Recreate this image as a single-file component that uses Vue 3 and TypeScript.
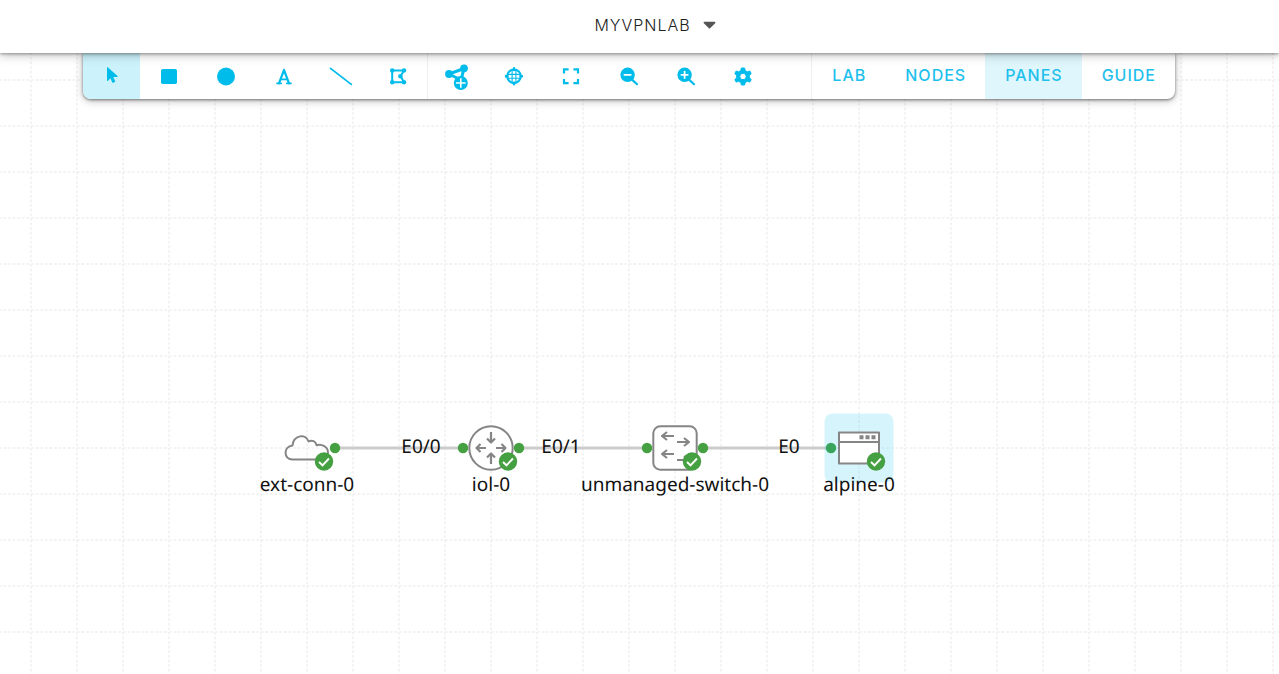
<script setup lang="ts">
import { ref } from 'vue'

interface Tool { id: string; label: string }
interface LabNode { id: string; kind: string; x: number }
interface Link { from: number; to: number; label: string; labelX: number }

const drawTools: Tool[] = [
  { id: 'select', label: 'Select' },
  { id: 'rect', label: 'Rectangle' },
  { id: 'ellipse', label: 'Ellipse' },
  { id: 'text', label: 'Text' },
  { id: 'line', label: 'Line' },
  { id: 'polygon', label: 'Polygon' },
]
const viewTools: Tool[] = [
  { id: 'add', label: 'Add nodes' },
  { id: 'center', label: 'Center view' },
  { id: 'fit', label: 'Fit to screen' },
  { id: 'out', label: 'Zoom out' },
  { id: 'in', label: 'Zoom in' },
  { id: 'settings', label: 'Settings' },
]
const groups = [drawTools, viewTools]
const tabs = ['LAB', 'NODES', 'PANES', 'GUIDE']
const activeTool = ref('select')
const activeTab = ref('PANES')
const selected = ref('alpine-0')

const nodes: LabNode[] = [
  { id: 'ext-conn-0', kind: 'cloud', x: 307 },
  { id: 'iol-0', kind: 'router', x: 491 },
  { id: 'unmanaged-switch-0', kind: 'switch', x: 675 },
  { id: 'alpine-0', kind: 'window', x: 859 },
]
const links: Link[] = [
  { from: 335, to: 463, label: 'E0/0', labelX: 421 },
  { from: 519, to: 647, label: 'E0/1', labelX: 561 },
  { from: 703, to: 831, label: 'E0', labelX: 789 },
]
</script>

<template>
  <div class="app">
    <header class="topbar">
      <button class="title" type="button">
        <span>MYVPNLAB</span>
        <svg width="13" height="8" viewBox="0 0 13 8" aria-hidden="true">
          <path d="M1.4 1.6h10.2L6.5 6.6z" fill="#555" stroke="#555" stroke-width="1.6" stroke-linejoin="round" />
        </svg>
      </button>
    </header>

    <nav class="toolbar">
      <div v-for="(group, g) in groups" :key="g" class="group">
        <button
          v-for="tool in group"
          :key="tool.id"
          type="button"
          class="tool"
          :class="{ active: tool.id === activeTool }"
          :aria-label="tool.label"
          @click="activeTool = tool.id"
        >
          <svg width="30" height="30" viewBox="-15 -15 30 30" aria-hidden="true">
            <path v-if="tool.id === 'select'" class="fill" d="M-5-8.2Q-5-9.4-4-8.6L5.300-.2Q6.300.7 5.200 1H1.200L3.200 5.200Q3.400 5.800 2.800 6.100L1.200 6.800Q.5 7 .3 6.400L-1.600 2.300-4 4.800Q-5 5.600-5 4.400Z" />
            <rect v-else-if="tool.id === 'rect'" class="fill" x="-8" y="-7" width="16" height="15" rx="1.8" />
            <circle v-else-if="tool.id === 'ellipse'" class="fill" cx="0" cy="0.5" r="9" />
            <g v-else-if="tool.id === 'text'" class="stroke">
              <path d="M-5 7.300 0-6 5 7.300" stroke-width="2.2" />
              <path d="M-7 7.300H-2.800M2.800 7.300H7M-3 3.300H3" stroke-width="1.7" />
            </g>
            <path v-else-if="tool.id === 'line'" class="stroke" d="M-10.5-7.6 10.3 8.4" stroke-width="1.8" />
            <g v-else-if="tool.id === 'polygon'">
              <path class="stroke" d="M-5.800-5.600H6L2.600.3 6 6.300H-5.800Z" stroke-width="2" />
              <circle v-for="p in [[-5.8, -5.6], [6, -5.6], [2.4, 0.3], [6, 6.3], [-5.8, 6.3]]" :key="p.join()" class="fill" :cx="p[0]" :cy="p[1]" r="2.2" />
            </g>
            <g v-else-if="tool.id === 'add'">
              <path class="stroke" d="M-8-2 7-7.500 4 4Z" stroke-width="3" />
              <circle class="fill" cx="-8" cy="-2" r="3.900" />
              <circle class="fill" cx="7" cy="-7.700" r="3.900" />
              <circle class="fill" cx="3.800" cy="7" r="7" />
              <path d="M-1 7H8.600M3.800 2.200V11.800" stroke="#fff" stroke-width="1.6" />
            </g>
            <g v-else-if="tool.id === 'center'" class="stroke">
              <circle cx="0" cy="0.3" r="6.800" stroke-width="2.1" />
              <path d="M-1.900-5.700V6.300M1.900-5.700V6.300M-6-1.600H6M-6 2.200H6" stroke-width="1.100" />
              <path d="M0-7.700V-6M0 6.600V8.300M-8-.0V.6M-8 .3H-6.500M6.500.3H8" stroke-width="2.4" />
            </g>
            <path v-else-if="tool.id === 'fit'" class="stroke square" d="M-7-2.4V-6.7H-2.4M2.4-6.7H7V-2.4M7 3V7.2H2.4M-2.4 7.2H-7V3" stroke-width="2.2" />
            <g v-else-if="tool.id === 'out' || tool.id === 'in'">
              <circle class="fill" cx="-1.4" cy="-1.2" r="7.2" />
              <path class="stroke" d="M3 3.6 8 8.2" stroke-width="2.2" />
              <path d="M-4.6-1.2H1.8" stroke="#fff" stroke-width="1.8" stroke-linecap="round" />
              <path v-if="tool.id === 'in'" d="M-1.4-4.4V2" stroke="#fff" stroke-width="1.8" stroke-linecap="round" />
            </g>
            <path
              v-else
              class="fill"
              fill-rule="evenodd"
              stroke="#00bceb"
              stroke-width="1"
              stroke-linejoin="round"
              d="M-1.6-8H1.6L2.2-5.4 4.3-4.2 6.8-5 8.2-2.4 6.3-.6V1.8L8.2 3.5 6.8 6.1 4.3 5.3 2.2 6.6 1.6 9H-1.6L-2.2 6.6-4.3 5.3-6.8 6.1-8.2 3.5-6.3 1.8V-.6L-8.2-2.4-6.8-5-4.3-4.2-2.2-5.4ZM0-2.7A3.2 3.2 0 1 0 0 3.7 3.2 3.2 0 1 0 0-2.7Z"
            />
          </svg>
        </button>
      </div>
      <div class="tabs">
        <button
          v-for="tab in tabs"
          :key="tab"
          type="button"
          class="tab"
          :class="{ active: tab === activeTab }"
          @click="activeTab = tab"
        >{{ tab }}</button>
      </div>
    </nav>

    <svg class="canvas" aria-label="Lab topology">
      <defs>
        <pattern id="grid" x="8" y="11" width="46" height="46" patternUnits="userSpaceOnUse">
          <path d="M23 0V46M0 23H46" stroke="#f0f0f0" stroke-width="1.6" stroke-dasharray="2.6 2" />
        </pattern>
      </defs>
      <rect width="100%" height="100%" fill="url(#grid)" />

      <g v-for="link in links" :key="link.label">
        <line :x1="link.from" :x2="link.to" y1="448" y2="448" stroke="#ccc" stroke-width="3" />
        <circle :cx="link.from" cy="448" r="5.2" fill="#45a041" />
        <circle :cx="link.to" cy="448" r="5.2" fill="#45a041" />
        <text class="label" :x="link.labelX" y="453">{{ link.label }}</text>
      </g>

      <g v-for="node in nodes" :key="node.id" :transform="`translate(${node.x} 448)`" @click="selected = node.id">
        <rect v-if="node.id === selected" x="-34.5" y="-34.5" width="69" height="69" rx="8" fill="#00bceb" fill-opacity="0.16" />
        <g class="device">
          <path v-if="node.kind === 'cloud'" d="M-14.500 11.500C-23.500 11.500-24-1.500-14.500-2.500-13.500-13-1-15 1.500-6.500 5-8.500 9-6.500 9.500-2.800 15-4.500 21-1 21 4.500 21 9 18 11.500 14 11.500Z" />
          <g v-else-if="node.kind === 'router'">
            <circle r="21.7" fill="#fff" />
            <path d="M0-16V-6M-4-9.5 0-5.5 4-9.5M0 16V6M-4 9.5 0 5.5 4 9.5M-5 0H-14M-10.5-4-14.5 0-10.5 4M5 0H14M10.5-4 14.5 0 10.5 4" stroke-width="2.2" />
          </g>
          <g v-else-if="node.kind === 'switch'">
            <rect x="-21.7" y="-21.7" width="43.4" height="43.4" rx="7" fill="#fff" />
            <path d="M-1-12H-12M-8-16-13-12-8-8M2-6H13M9-10 14-6 9-2M-1 6H-12M-8 2-13 6-8 10M2 12H13M9 8 14 12 9 16" stroke-width="2.2" />
          </g>
          <g v-else>
            <path d="M-20-15.500H20V15.500H-20ZM-20-6H20" fill="#fff" />
            <path d="M.5-10.700H4.500M6.500-10.700H10.500M12.500-10.700H16.500" stroke-width="4" />
          </g>
        </g>
        <circle cx="17" cy="13.5" r="9.2" fill="#45a041" />
        <path d="M12 14 15.500 17.300 22 10.500" fill="none" stroke="#fff" stroke-width="1.9" />
        <text class="label" x="0" y="43">{{ node.id }}</text>
      </g>
    </svg>
  </div>
</template>

<style>
body {
  margin: 0;
  background: #fff;
}
</style>

<style scoped>
.app {
  display: grid;
  grid-template: auto auto 1fr / 100%;
  min-height: 100vh;
  font-family: Inter, "Liberation Sans", sans-serif;
}

button {
  border: 0;
  background: none;
  font: inherit;
  cursor: pointer;
}

.topbar {
  grid-area: 1 / 1;
  z-index: 3;
  display: flex;
  justify-content: center;
  padding-left: 31px;
  height: 53px;
  background: #fff;
  box-shadow: 0 1px 3px rgba(0, 0, 0, 0.35), 0 2px 10px rgba(0, 0, 0, 0.25);
}

.title {
  display: flex;
  align-items: center;
  gap: 12px;
  padding: 0 0 4px;
  color: #222;
  font-size: 16px;
  font-weight: 300;
  letter-spacing: 1px;
}

.toolbar {
  grid-area: 2 / 1;
  z-index: 2;
  display: flex;
  height: 46px;
  margin: 0 104px 0 83px;
  background: #fff;
  border-radius: 0 0 8px 8px;
  box-shadow: 0 1px 3px rgba(0, 0, 0, 0.45), 0 2px 8px rgba(0, 0, 0, 0.25);
}

.group {
  display: flex;
  width: 344px;
}

.group + .group {
  border-left: 1px solid #eee;
}

.tool {
  display: flex;
  flex: 1;
  align-items: center;
  justify-content: center;
  padding: 0;
}

.tool.active {
  background: #ccf2fb;
  border-radius: 0 0 0 8px;
}

.fill {
  fill: #00bceb;
}

.stroke {
  fill: none;
  stroke: #00bceb;
  stroke-linecap: round;
  stroke-linejoin: round;
}

.square {
  stroke-linecap: butt;
  stroke-linejoin: miter;
}

.tabs {
  display: flex;
  margin-left: auto;
  border-left: 1px solid #eee;
}

.tab {
  padding: 0 19px 2px 20px;
  color: #1fc0ec;
  font-size: 16px;
  font-weight: 500;
  letter-spacing: 1px;
}

.tab.active {
  background: #dff6fd;
}

.canvas {
  grid-area: 1 / 1 / 4 / 2;
  width: 100%;
  height: 100%;
}

.device {
  fill: none;
  stroke: #858585;
  stroke-width: 2;
  stroke-linejoin: round;
}

.label {
  fill: #111;
  font-family: "Noto Sans", sans-serif;
  font-size: 19px;
  text-anchor: middle;
  text-rendering: geometricPrecision;
}
</style>
